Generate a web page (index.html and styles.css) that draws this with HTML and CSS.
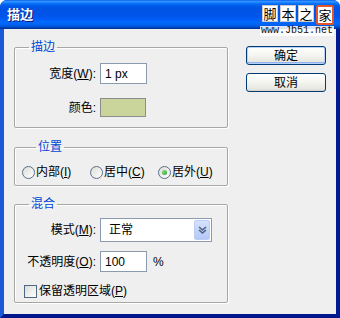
FILE: index.html
```html
<!DOCTYPE html>
<html lang="zh-CN">
<head>
    <meta charset="UTF-8">
    <title>描边</title>
    <link rel="stylesheet" href="styles.css">
</head>
<body>
    <div class="window">
        <div class="titlebar">描边</div>
        <div class="client">
            <div class="main">
                <fieldset class="group group-stroke">
                    <legend>描边</legend>
                    <div class="row row-width">
                        <label class="label">宽度(<u>W</u>):</label>
                        <input type="text" class="field" value="1 px">
                    </div>
                    <div class="row row-color">
                        <label class="label">颜色:</label>
                        <div class="swatch"></div>
                    </div>
                </fieldset>

                <fieldset class="group group-position">
                    <legend>位置</legend>
                    <div class="radios">
                        <div class="radio"><span class="dot"></span>内部(<u>I</u>)</div>
                        <div class="radio"><span class="dot"></span>居中(<u>C</u>)</div>
                        <div class="radio"><span class="dot checked"></span>居外(<u>U</u>)</div>
                    </div>
                </fieldset>

                <fieldset class="group group-blend">
                    <legend>混合</legend>
                    <div class="row row-mode">
                        <label class="label">模式(<u>M</u>):</label>
                        <div class="select">
                            <span class="select-value">正常</span>
                            <span class="select-arrow">
                                <svg width="9" height="8" viewBox="0 0 9 8">
                                    <path d="M1 1 L4.5 4 L8 1 M1 4 L4.5 7 L8 4" fill="none" stroke="#4d6185" stroke-width="1.6"/>
                                </svg>
                            </span>
                        </div>
                    </div>
                    <div class="row row-opacity">
                        <label class="label">不透明度(<u>O</u>):</label>
                        <input type="text" class="field" value="100">
                        <span class="unit">%</span>
                    </div>
                    <div class="check">
                        <span class="box"></span>保留透明区域(<u>P</u>)
                    </div>
                </fieldset>
            </div>

            <div class="buttons">
                <button class="btn default">确定</button>
                <button class="btn">取消</button>
            </div>
        </div>

        <div class="watermark">
            <div class="wm-chars">
                <span>脚</span><span>本</span><span>之</span><span class="home">家</span>
            </div>
            <div class="wm-url">www.Jb51.net</div>
        </div>
    </div>
</body>
</html>
```

FILE: styles.css
```css
* {
    box-sizing: border-box;
}

body {
    margin: 0;
    font-family: "Liberation Sans", "Noto Sans CJK SC", sans-serif;
    font-size: 12px;
    line-height: 14px;
    color: #000;
    background: #fff;
}

.window {
    position: relative;
    width: 340px;
    height: 318px;
    display: flex;
    flex-direction: column;
    background: #0831d9;
    border-radius: 7px 7px 0 0;
    overflow: hidden;
}

.titlebar {
    height: 29px;
    padding: 1px 0 0 7px;
    display: flex;
    align-items: center;
    color: #fff;
    font-size: 13px;
    font-weight: bold;
    text-shadow: 1px 1px 0 #0a1a7a;
    background: linear-gradient(to bottom, #0058ee 0%, #3593ff 4%, #288eff 7%, #127dff 10%, #036ffc 13%, #0262ee 17%, #0057e5 23%, #0054e3 30%, #0055eb 56%, #005bf5 66%, #026afe 76%, #0062ef 86%, #0052d6 92%, #0040ab 96%, #003092 100%);
}

.client {
    flex: 1;
    display: flex;
    background: #efefef;
    border-left: 4px solid #1a5ad9;
    border-right: 4px solid #001a94;
    border-bottom: 4px solid #00168a;
}

.main {
    width: 224px;
    padding: 11px 0 0 10px;
}

.group {
    margin: 0;
    padding: 0;
    min-width: 0;
    width: 214px;
    border: 1px solid #a7a7a4;
    border-radius: 2px;
    box-shadow: 1px 1px 0 #fff, inset 1px 1px 0 #fff;
}

.group legend {
    margin-left: 14px;
    padding: 0 2px;
    color: #0046d5;
    line-height: 14px;
}

.group-stroke {
    padding: 9px 0 10px;
}

.group-position {
    margin-top: 12px;
    padding: 11px 0 6px 7px;
}

.group-blend {
    margin-top: 11px;
    padding: 7px 0 4px;
}

.row {
    display: flex;
    align-items: center;
}

.label {
    width: 81px;
    margin-right: 4px;
    text-align: right;
    white-space: nowrap;
}

.field {
    width: 47px;
    height: 21px;
    padding: 0 4px;
    border: 1px solid #8a9bb0;
    background: #fff;
    font-family: "Liberation Sans", sans-serif;
    font-size: 12px;
    color: #000;
}

.row-color {
    margin-top: 14px;
}

.swatch {
    width: 46px;
    height: 19px;
    border: 1px solid #8d8d8d;
    background: #cad59b;
}

.radios {
    display: flex;
}

.radio {
    width: 68px;
    display: flex;
    align-items: center;
    white-space: nowrap;
}

.dot {
    width: 13px;
    height: 13px;
    margin-right: 1px;
    border: 1px solid #5b6e87;
    border-radius: 50%;
    background: linear-gradient(135deg, #dcdcd7, #fff);
    display: flex;
    align-items: center;
    justify-content: center;
}

.dot.checked::after {
    content: "";
    width: 5px;
    height: 5px;
    border-radius: 50%;
    background: radial-gradient(circle at 35% 35%, #7fd97f, #21a121);
}

.select {
    width: 112px;
    height: 24px;
    border: 1px solid #8a9bb0;
    background: #fff;
    display: flex;
    align-items: center;
    justify-content: space-between;
    padding: 1px;
}

.select-value {
    padding-left: 7px;
}

.select-arrow {
    width: 16px;
    height: 20px;
    border: 1px solid #bacdf5;
    border-radius: 2px;
    background: linear-gradient(to bottom, #d5e2fd, #b4c8f6);
    display: flex;
    align-items: center;
    justify-content: center;
}

.row-opacity {
    margin-top: 9px;
}

.unit {
    margin-left: 6px;
}

.check {
    margin-top: 12px;
    padding-left: 9px;
    display: flex;
    align-items: center;
    white-space: nowrap;
}

.box {
    width: 13px;
    height: 13px;
    margin-right: 2px;
    border: 1px solid #4f6886;
    background: linear-gradient(135deg, #dcdcd7, #fff);
}

.buttons {
    padding: 17px 0 0 18px;
    display: flex;
    flex-direction: column;
    gap: 8px;
}

.btn {
    width: 80px;
    height: 19px;
    padding: 0;
    border: 1px solid #003c74;
    border-radius: 3px;
    background: linear-gradient(to bottom, #fff 0%, #f4f4f0 50%, #e6e5de 90%, #d6d0c5 100%);
    font-family: "Liberation Sans", "Noto Sans CJK SC", sans-serif;
    font-size: 12px;
    line-height: 14px;
    color: #000;
}

.btn.default {
    box-shadow: inset 0 0 0 1px #b9d1fa, inset 0 -1px 0 1px #8db2f0;
}

.watermark {
    position: absolute;
    top: 5px;
    right: 6px;
    width: 74px;
    display: flex;
    flex-direction: column;
    align-items: flex-end;
}

.wm-chars {
    display: flex;
    gap: 2px;
    align-items: flex-start;
}

.wm-chars span {
    width: 16px;
    height: 17px;
    background: #fff;
    border: 1px solid #c9c9c9;
    font-family: "Noto Sans CJK SC", sans-serif;
    font-size: 13px;
    line-height: 15px;
    text-align: center;
}

.wm-chars .home {
    width: 18px;
    height: 20px;
    border: 2px solid #e2562b;
    border-radius: 2px;
    line-height: 16px;
}

.wm-url {
    margin-top: 1px;
    padding: 0 1px;
    background: rgba(255, 255, 255, 0.85);
    font-family: "Liberation Mono", monospace;
    font-size: 10px;
    line-height: 10px;
    color: #111;
}
```
